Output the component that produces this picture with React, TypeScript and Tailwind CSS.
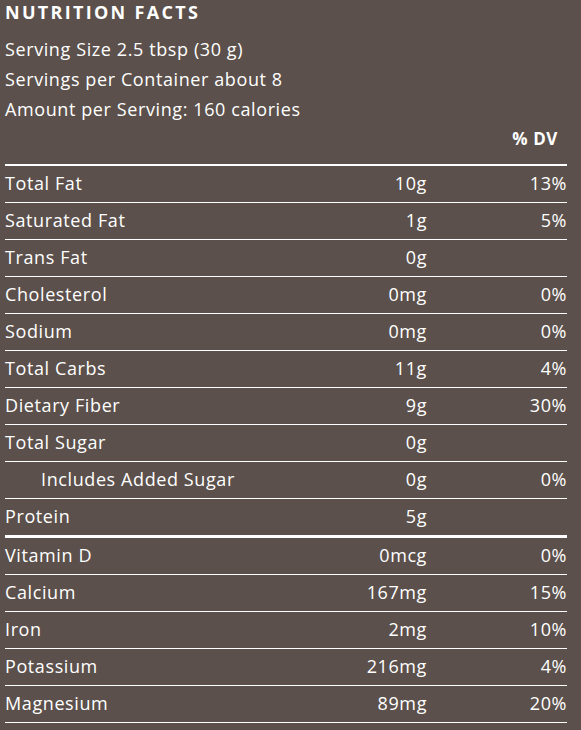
const rows = [
  { name: "Total Fat", amount: "10g", dv: "13%" },
  { name: "Saturated Fat", amount: "1g", dv: "5%" },
  { name: "Trans Fat", amount: "0g", dv: "" },
  { name: "Cholesterol", amount: "0mg", dv: "0%" },
  { name: "Sodium", amount: "0mg", dv: "0%" },
  { name: "Total Carbs", amount: "11g", dv: "4%" },
  { name: "Dietary Fiber", amount: "9g", dv: "30%" },
  { name: "Total Sugar", amount: "0g", dv: "" },
  { name: "Includes Added Sugar", amount: "0g", dv: "0%", indent: true },
  { name: "Protein", amount: "5g", dv: "", thick: true },
  { name: "Vitamin D", amount: "0mcg", dv: "0%" },
  { name: "Calcium", amount: "167mg", dv: "15%" },
  { name: "Iron", amount: "2mg", dv: "10%" },
  { name: "Potassium", amount: "216mg", dv: "4%" },
  { name: "Magnesium", amount: "89mg", dv: "20%" },
];

export default function App() {
  return (
    <div
      className="min-h-[730px] w-[581px] bg-[#5b504b] pl-[5px] text-white"
      style={{ fontFamily: '"Open Sans", Arial, sans-serif' }}
    >
      <div className="w-[562px]">
        <h1 className="h-[24px] text-[18px] font-bold leading-[24px] tracking-[2.3px]">NUTRITION FACTS</h1>
        <div className="mt-[10px] text-[18px] leading-[30px] tracking-[0.6px]">
          <p>Serving Size 2.5 tbsp (30 g)</p>
          <p>Servings per Container about 8</p>
          <p>Amount per Serving: 160 calories</p>
        </div>
        <div className="flex h-[29px] items-center justify-end pr-[9px] text-[17px] font-bold tracking-[0.6px]">% DV</div>
        <div className="mt-[11px] border-t-2 border-white">
          {rows.map((r, i) => (
            <div
              key={i}
              className={`grid h-[37px] grid-cols-[1fr_120px_140px] items-center pb-[2px] text-[18px] tracking-[0.6px] ${
                r.thick ? "h-[39px] border-b-[3px]" : "border-b"
              } border-white`}
            >
              <span className={r.indent ? "pl-[36px]" : ""}>{r.name}</span>
              <span className="text-right">{r.amount}</span>
              <span className="text-right">{r.dv}</span>
            </div>
          ))}
        </div>
      </div>
    </div>
  );
}
